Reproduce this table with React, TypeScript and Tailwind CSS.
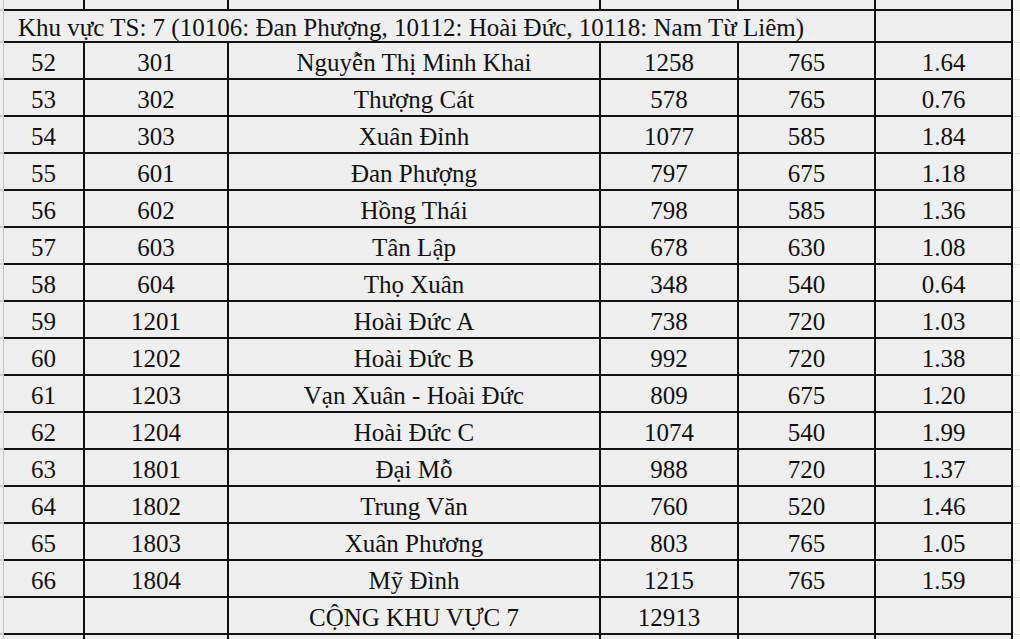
const rows: [string, string, string, string, string, string][] = [
  ['52', '301', 'Nguyễn Thị Minh Khai', '1258', '765', '1.64'],
  ['53', '302', 'Thượng Cát', '578', '765', '0.76'],
  ['54', '303', 'Xuân Đỉnh', '1077', '585', '1.84'],
  ['55', '601', 'Đan Phượng', '797', '675', '1.18'],
  ['56', '602', 'Hồng Thái', '798', '585', '1.36'],
  ['57', '603', 'Tân Lập', '678', '630', '1.08'],
  ['58', '604', 'Thọ Xuân', '348', '540', '0.64'],
  ['59', '1201', 'Hoài Đức A', '738', '720', '1.03'],
  ['60', '1202', 'Hoài Đức B', '992', '720', '1.38'],
  ['61', '1203', 'Vạn Xuân - Hoài Đức', '809', '675', '1.20'],
  ['62', '1204', 'Hoài Đức C', '1074', '540', '1.99'],
  ['63', '1801', 'Đại Mỗ', '988', '720', '1.37'],
  ['64', '1802', 'Trung Văn', '760', '520', '1.46'],
  ['65', '1803', 'Xuân Phương', '803', '765', '1.05'],
  ['66', '1804', 'Mỹ Đình', '1215', '765', '1.59'],
  ['', '', 'CỘNG KHU VỰC 7', '12913', '', ''],
];

// widths include the 2px right border of each cell
const widths = ['w-[81px]', 'w-[144px]', 'w-[372px]', 'w-[138px]', 'w-[137px]', 'w-[137px]'];

const Gutter = () => (
  <>
    <div className="w-[3px] shrink-0 border-b-2 border-[#c8c8c8]" />
    <div className="w-px shrink-0 bg-[#c4c4c4]" />
  </>
);

const Edge = () => <div className="flex-1 border-b border-[#deded9] bg-[#f8f8f5]" />;

const Row = ({ cells, h }: { cells: string[]; h: string }) => (
  <div className={`flex ${h}`}>
    <Gutter />
    {cells.map((c, i) => (
      <div
        key={i}
        className={`${widths[i]} shrink-0 flex items-center justify-center border-b-2 border-r-2 border-[#111] pt-[3px]`}
      >
        {c}
      </div>
    ))}
    <Edge />
  </div>
);

export default function App() {
  return (
    <div className="w-[1020px] h-[639px] overflow-hidden bg-[#efefef] text-[#111] font-['Liberation_Serif',serif] text-[25px] leading-none">
      <Row cells={['', '', '', '', '', '']} h="h-[11px]" />

      <div className="flex h-[32px]">
        <Gutter />
        <div className="w-[872px] shrink-0 flex items-center pl-[14px] border-b-2 border-r-2 border-[#111] pt-[2px]">
          Khu vực TS: 7 (10106: Đan Phượng, 10112: Hoài Đức, 10118: Nam Từ Liêm)
        </div>
        <div className="w-[137px] shrink-0 border-b-2 border-r-2 border-[#111]" />
        <Edge />
      </div>

      {rows.map((r) => (
        <Row key={r[0] + r[2]} cells={r} h="h-[37px]" />
      ))}

      <Row cells={['', '', '', '', '', '']} h="h-[37px]" />
    </div>
  );
}
